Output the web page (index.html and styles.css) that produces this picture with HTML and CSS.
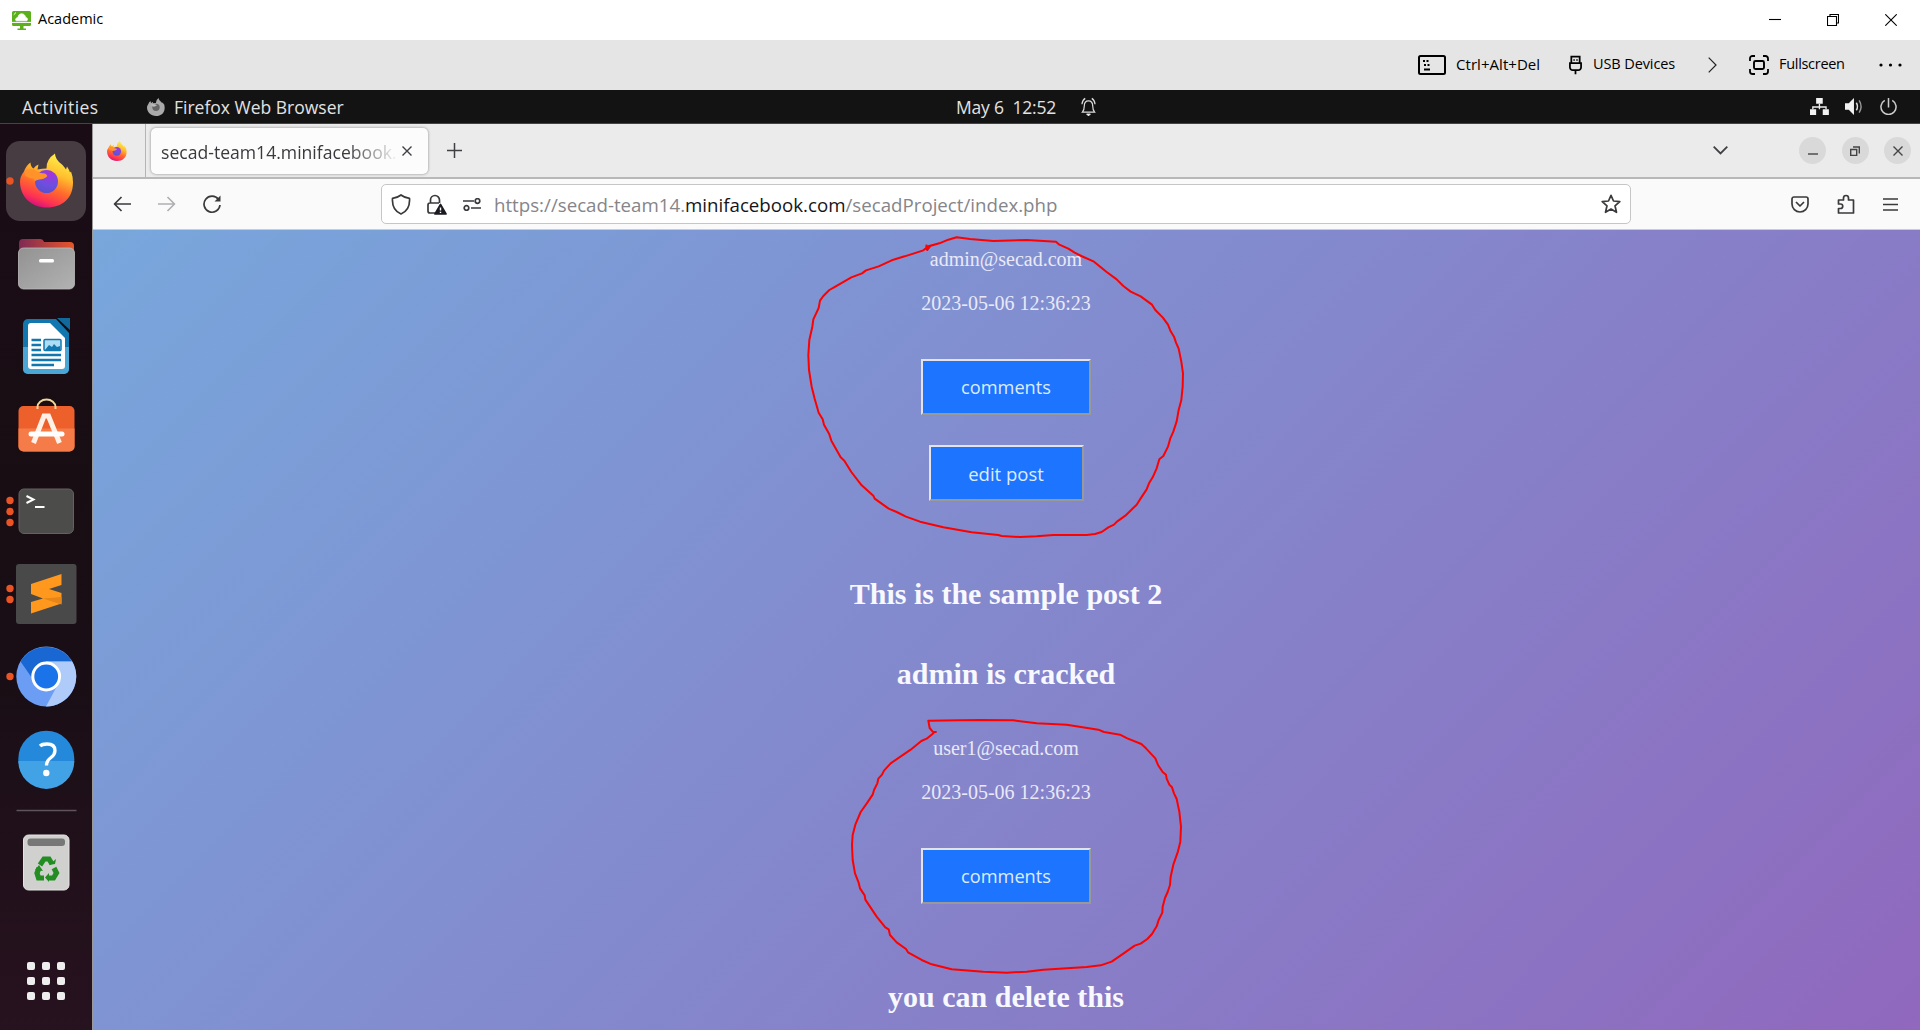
FILE: index.html
```html
<!DOCTYPE html>
<html lang="en">
<head>
<meta charset="utf-8">
<title>Academic</title>
<link rel="stylesheet" href="styles.css">
</head>
<body>
<header class="titlebar">
  <svg class="app-icon" viewBox="0 0 19 19"><path fill="#5cb01c" d="M1.500 0h16a1.500 1.500 0 0 1 1.500 1.500v12a1.500 1.500 0 0 1-1.500 1.500H1.500A1.500 1.500 0 0 1 0 13.500v-12A1.500 1.500 0 0 1 1.500 0Z"/><path d="M4.200 9.800C2.800 8.500 4.200 6.600 6 6.600 6 4 8 2.600 10 2.900c2 0 3.300 1.700 3.400 3.300 2 .5 2.800 2.300 1.400 3.600Z" fill="#fff" stroke="#fff" stroke-width=".8"/><path d="M0 11.400h19" stroke="#fff"/><path d="M1.700 3.800 4 1.500" stroke="#fff"/><path fill="#5cb01c" d="M8 15h3.500v2.500H14V19H5.500v-1.500H8Z"/></svg>
  <span class="app-name">Academic</span>
  <div class="win-controls">
    <svg viewBox="0 0 12 12"><path d="M0 5.500h12"/></svg>
    <svg viewBox="0 0 12 12"><path d="M.5 2.500h9v9h-9zM3 2.500v-2h8.500v8.500H9.500"/></svg>
    <svg viewBox="0 0 12 12"><path d="M.3.300l11.400 11.400M11.700.300.300 11.700"/></svg>
  </div>
</header>
<nav class="vm-toolbar">
  <svg class="kbd" viewBox="0 0 28 20"><rect x="1" y="1" width="26" height="18" rx="1.500" fill="none" stroke="#000" stroke-width="2"/><path d="M5 6h2m1.500 0h2M6 10h2m1.500 0h2M6 14.500h6" stroke="#000" stroke-width="1.800"/></svg>
  <span class="t-cad">Ctrl+Alt+Del</span>
  <svg class="usb" viewBox="0 0 14 20"><path d="M2.500 8V1h9v7M1 8h12v4.500a3 3 0 0 1-3 3H4a3 3 0 0 1-3-3ZM7 15.500V20" fill="none" stroke="#000" stroke-width="1.900"/><path d="M4.700 4.500h1.600m1.500 0h1.600" stroke="#000" stroke-width="1.600"/></svg>
  <span class="t-usb">USB Devices</span>
  <svg class="more" viewBox="0 0 9 16"><path d="M.7.700 8 8 .7 15.300" fill="none" stroke="#222" stroke-width="1.200"/></svg>
  <svg class="full" viewBox="0 0 20 20"><path d="M1 6V3.500A2.500 2.500 0 0 1 3.500 1H6m8 0h2.500A2.500 2.500 0 0 1 19 3.500V6m0 8v2.500a2.500 2.500 0 0 1-2.500 2.500H14m-8 0H3.500A2.500 2.500 0 0 1 1 16.500V14" fill="none" stroke="#000" stroke-width="1.800"/><rect x="5" y="6" width="10" height="8" rx="1.500" fill="none" stroke="#000" stroke-width="1.900"/></svg>
  <span class="t-full">Fullscreen</span>
  <svg class="dots" viewBox="0 0 24 4"><circle cx="2" cy="2" r="1.600"/><circle cx="11.500" cy="2" r="1.600"/><circle cx="21" cy="2" r="1.600"/></svg>
</nav>

<div class="gnome-bar">
  <span class="t-act">Activities</span>
  <svg class="gn-fox" viewBox="0 0 54 54"><use href="#foxshape" fill="#aaa"/><circle cx="27" cy="28" r="11" fill="#666"/><path d="M10 20q10-5 20 2-8 6-14 3Z" fill="#bbb"/></svg>
  <span class="t-ff">Firefox Web Browser</span>
  <span class="t-clock">May 6&nbsp; 12:52</span>
  <svg class="bell" viewBox="0 0 16 20"><path d="M1.500 15.500h13C12.800 13.500 12.500 12 12.500 9c0-3.500-1.500-5.500-4.500-5.500S3.500 5.500 3.500 9c0 3-.3 4.500-2 6.500ZM1 7C1.300 4 2.500 2 4.500.8M15 7C14.700 4 13.500 2 11.500.8" fill="none" stroke="#ddd" stroke-width="1.300"/><path d="M6 17.500h4L8 19.500Z" fill="#eee" stroke="#eee"/></svg>
  <div class="tray">
    <svg viewBox="0 0 20 18"><path fill="#f2f2f2" d="M6.500 0h7v6h-7zM0 12h6.500v6H0zM13.500 12H20v6h-6.500z"/><path d="M10 6v3.500M3 12V9.500h14V12M10 9v3" fill="none" stroke="#eee" stroke-width="1.400"/></svg>
    <svg viewBox="0 0 20 18"><path fill="#f2f2f2" d="M0 5.500h4L9.500 0v18L4 12.500H0z"/><path d="M12 5q2.500 4 0 8" fill="none" stroke="#ddd" stroke-width="1.600"/><path d="M15 2.500q4 6.500 0 13" fill="none" stroke="#999" stroke-width="1.500"/></svg>
    <svg viewBox="0 0 18 18"><path d="M5 2.500a8 8 0 1 0 8 0M9 0v10" fill="none" stroke="#ccc" stroke-width="1.600"/></svg>
  </div>
</div>

<div class="desktop">
  <aside class="dock">
    <svg viewBox="0 0 92 907">
      <defs>
        <linearGradient id="fox" x1=".75" y1="0" x2=".35" y2="1"><stop offset="0" stop-color="#fff44f"/><stop offset=".35" stop-color="#ffc02e"/><stop offset=".62" stop-color="#ff6b2c"/><stop offset=".85" stop-color="#ff3352"/><stop offset="1" stop-color="#d6107e"/></linearGradient>
        <radialGradient id="globe" cx=".65" cy=".15" r=".9"><stop offset="0" stop-color="#a832d8"/><stop offset=".6" stop-color="#6c4fe0"/><stop offset="1" stop-color="#5a50c8"/></radialGradient>
        <linearGradient id="fold" x2="1"><stop offset="0" stop-color="#7d2a55"/><stop offset="1" stop-color="#e8562a"/></linearGradient>
        <linearGradient id="grey" x2="1" y2="1"><stop offset="0" stop-color="#929292"/><stop offset="1" stop-color="#b2b2b2"/></linearGradient>
        <path id="foxshape" d="M4 18Q6 12 10.500 9q0 4 3 6 2-3 5-4l-1 5q5-1 9-1Q26 6 35 0q0 6 7 11 2 2 4 5l1-3q2 3 3 6l1-1q2 5 2 11C53 45 42 54 27 54S0 44 0 28q0-5 4-10Z"/>
        <g id="firefox"><use href="#foxshape" fill="url(#fox)"/><circle cx="26.500" cy="28" r="11.500" fill="url(#globe)"/><path d="M5 18q4-3 9-2 5 4 11 4 3 2 2 3-3 3-8 3-4 1-4 2-1-3-2-3-4 0-8-3Z" fill="#ff932a"/></g>
      </defs>
      <rect x="6" y="18" width="80" height="80" rx="14" fill="#463c42"/>
      <g fill="#ea5324"><circle cx="10" cy="58" r="3.700"/><circle cx="10" cy="377.500" r="3.700"/><circle cx="10" cy="388.500" r="3.700"/><circle cx="10" cy="399.500" r="3.700"/><circle cx="10" cy="465.500" r="3.700"/><circle cx="10" cy="476.500" r="3.700"/><circle cx="10" cy="553.500" r="3.700"/></g>
      <use href="#firefox" transform="translate(20 30.500)"/>
      <g transform="translate(0 -3)">
        <path d="M19 123a4 4 0 0 1 4-4h17q3 0 4 3h26a4 4 0 0 1 4 4v24H19Z" fill="url(#fold)"/><rect x="18.500" y="128" width="56" height="41" rx="5" fill="url(#grey)" stroke="#bbb" stroke-width=".8"/><rect x="39" y="139" width="15" height="3.600" rx="1.500" fill="#fff"/>
      </g>
      <g transform="translate(0 -3)">
        <path d="M28 199h28l13 14v36a5 5 0 0 1-5 5H28a5 5 0 0 1-5-5V204a5 5 0 0 1 5-5Z" fill="#1277ae"/><path d="M23 227h46v22a5 5 0 0 1-5 5H28a5 5 0 0 1-5-5Z" fill="#4aa7d5"/><path d="M28 206q0-3 3-3h19l15 15v28q0 3-3 3H31q-3 0-3-3Z" fill="#fff"/><path d="M57 198h13v12Z" fill="#126a9c"/><path d="M31.500 220H41m-9.500 5H41m-9.500 5H41m-9.500 5H61m-29.500 5H61m-29.500 5H54" stroke="#1277ae" stroke-width="2.300"/><rect x="44" y="219.500" width="17" height="11" rx="1" fill="#aedcf4" stroke="#1277ae" stroke-width="1.500"/><path d="m45 230 4-5 3 2 2-3 3 3 3-1v4Z" fill="#1277ae"/>
      </g>
      <g>
        <rect x="18.500" y="283" width="56" height="45.500" rx="5" fill="#ee602b"/><path d="M18.500 305.500h56v18a5 5 0 0 1-5 5h-46a5 5 0 0 1-5-5Z" fill="#f57c49"/><path d="M37.500 286v-2a9 7.500 0 0 1 18 0v2" fill="none" stroke="#efd69b" stroke-width="2"/><path d="m33.500 320 10.500-27h4.500L59.500 320" fill="none" stroke="#fff1e8" stroke-width="5"/><path d="M31 311h31" stroke="#fff" stroke-width="5" stroke-linecap="round"/>
      </g>
      <rect x="19" y="366" width="54.500" height="44.500" rx="5" fill="#4c4c4b" stroke="#626262"/><path d="m26.500 373 7 3.500-7 3.500M35 384h9.500" fill="none" stroke="#fff" stroke-width="2"/>
      <rect x="16" y="441" width="60.500" height="60" rx="3" fill="#494949"/><path d="m31 461 30.500-10v11L49 466l12.500 4v10.500L31 490.500V479l12-3.500-12-4.500Z" fill="#ff981d"/><path d="m43 475.500 18.500 6V474Z" fill="#e78518"/>
      <circle cx="46.300" cy="553.500" r="30" fill="#6c9df5"/><path d="M20.500 538.500A30 30 0 0 1 72 538.500H46.300v15H31Z" fill="#1967d2"/><path d="M72.200 538.500A30 30 0 0 1 46 583.500l15-28-15-17Z" fill="#afcbfa"/><circle cx="46.200" cy="553.500" r="13.400" fill="#1a73e8" stroke="#fff" stroke-width="3"/>
      <circle cx="46.300" cy="635.700" r="28" fill="#2489da"/><path d="M18.300 638h56a28 28 0 0 1-56 0Z" fill="#42a2e6"/><path d="M40 623q2-2 7-2 8 0 8 6.500 0 4-4 7-4.500 3-4.500 8" fill="none" stroke="#fff" stroke-width="3.300"/><circle cx="46.300" cy="650" r="3.200" fill="#fff"/>
      <path d="M16.500 687.500h60" stroke="#5e5459" stroke-width="1.300"/>
      <rect x="23.500" y="712" width="45.500" height="55" rx="5" fill="#d0d1cf" stroke="#e3e3e3"/><rect x="27.500" y="715.500" width="37.500" height="7.500" rx="3" fill="#777"/>
      <g fill="none" stroke="#238c22" stroke-width="5.200"><path d="m40 742 4-6h5l3 5M54 745l2.500 5-3 5H48M44 755h-5.500l-1.500-5 2-5"/></g><path d="m49 742 6-1 1-5ZM49 750v9l-4-4.500ZM35 747l4-5 4 6Z" fill="#238c22"/>
      <g fill="#eee"><rect x="27" y="839" width="8" height="8" rx="2"/><rect x="42" y="839" width="8" height="8" rx="2"/><rect x="57" y="839" width="8" height="8" rx="2"/><rect x="27" y="854" width="8" height="8" rx="2"/><rect x="42" y="854" width="8" height="8" rx="2"/><rect x="57" y="854" width="8" height="8" rx="2"/><rect x="27" y="869" width="8" height="8" rx="2"/><rect x="42" y="869" width="8" height="8" rx="2"/><rect x="57" y="869" width="8" height="8" rx="2"/></g>
    </svg>
  </aside>

  <section class="browser">
    <div class="tabstrip">
      <div class="pinned"><svg viewBox="0 0 54 54"><use href="#firefox"/></svg></div>
      <div class="tab"><span class="tab-title">secad-team14.minifacebook.</span><svg class="tab-x" viewBox="0 0 10 10"><path d="m.5.500 9 9m0-9-9 9"/></svg></div>
      <svg class="newtab" viewBox="0 0 14 14"><path d="M7 0v14M0 7h14"/></svg>
      <svg class="alltabs" viewBox="0 0 15 9"><path d="m.7.700 6.800 6.800L14.300.700"/></svg>
      <div class="ctl"><svg viewBox="0 0 10 10"><path d="M0 8h10"/></svg></div>
      <div class="ctl"><svg viewBox="0 0 10 10"><path d="M.7 3.500h6v6h-6zM3 1h6.300v6.500" /></svg></div>
      <div class="ctl"><svg viewBox="0 0 10 10"><path d="m.5.500 9 9m0-9-9 9"/></svg></div>
    </div>
    <div class="navbar">
      <svg class="back" viewBox="0 0 18 16"><path d="M18 8H1.500M8.500 1l-7 7 7 7"/></svg>
      <svg class="fwd" viewBox="0 0 18 16"><path d="M0 8h16.500M9.500 1l7 7-7 7"/></svg>
      <svg class="reload" viewBox="0 0 20 20"><path d="M16.500 5.500A8 8 0 1 0 18 11"/><path d="M18.500 1.500v6h-6Z" fill="#3a3a3d" stroke="none"/></svg>
      <div class="urlbar">
        <svg class="shield" viewBox="0 0 20 21"><path d="M10 1C7.500 3 4.500 4 1.500 4.300 1 11 3 17 10 20c7-3 9-9 8.500-15.700C15.500 4 12.500 3 10 1Z"/></svg>
        <svg class="lock" viewBox="0 0 20 21"><path d="M3.500 9V6a4.500 4.500 0 0 1 9 0v3M9 19H3a2 2 0 0 1-2-2v-6a2 2 0 0 1 2-2h9"/><path d="m13.500 10.500 5.500 9.500H8Z" fill="#1c1b22" stroke="#1c1b22"/><path d="M13.500 13.500v3m0 1.200v1.300" stroke="#fff" stroke-width="1.400"/></svg>
        <svg class="perm" viewBox="0 0 18 13"><path d="M0 3h11M8 10h10"/><circle cx="14.500" cy="3" r="2.300"/><circle cx="3.500" cy="10" r="2.300"/></svg>
        <span class="url"><span class="u1">https://secad-team14.</span><b>minifacebook.com</b><span class="u3">/secadProject/index.php</span></span>
        <svg class="star" viewBox="0 0 20 20"><path d="m10 1.300 2.500 5.700 6.300.6-4.800 4.200 1.500 6.500L10 15l-5.500 3.300L6 11.800 1.200 7.600l6.300-.6Z"/></svg>
      </div>
      <svg class="pocket" viewBox="0 0 18 17"><path d="M3 1h12a2 2 0 0 1 2 2v5a8 8 0 0 1-16 0V3a2 2 0 0 1 2-2ZM5 6l4 4 4-4"/></svg>
      <svg class="ext" viewBox="0 0 18 20"><path d="M1.500 6h5V4a2.500 2.500 0 0 1 5 0v2h5v13h-15v-4.500h2a2.200 2.200 0 0 0 0-4.500h-2Z"/></svg>
      <svg class="menu" viewBox="0 0 15 13"><path d="M0 1h15M0 6.500h15M0 12h15"/></svg>
    </div>
    <main class="page">
      <p>admin@secad.com</p>
      <p>2023-05-06 12:36:23</p>
      <button class="btn btn-comments">comments</button>
      <button class="btn btn-edit">edit post</button>
      <h2 class="post-title">This is the sample post 2</h2>
      <h2 class="post-body">admin is cracked</h2>
      <p>user1@secad.com</p>
      <p>2023-05-06 12:36:23</p>
      <button class="btn btn-comments">comments</button>
      <h2 class="post-title">you can delete this</h2>
    </main>
  </section>
</div>

<svg class="ink" viewBox="0 0 1920 1030">
  <path transform="translate(780 220) scale(.33333)" d="M440 74L438 86L442 90L452 77L478 70L505 59L530 52L570 57L640 63L740 60L828 65L838 74L865 86L884 98L904 108L942 125L980 156L1010 178L1030 198L1052 215L1082 229L1116 254L1126 270L1148 292L1164 314L1172 334L1182 350L1188 368L1196 386L1204 425L1209 460L1208 500L1204 540L1196 570L1190 604L1180 635L1171 655L1164 680L1150 708L1138 718L1130 745L1118 772L1107 790L1100 808L1084 832L1070 854L1036 887L1012 904L1002 914L985 922L965 936L945 942L920 945L820 945L770 949L720 951L665 948L655 945L575 937L490 922L420 905L378 890L350 876L326 866L284 836L280 827L245 796L214 756L193 722L182 712L154 662L148 643L132 614L128 598L116 578L104 536L95 500L87 450L85 405L88 360L97 320L100 298L116 264L120 242L130 228L148 210L162 202L214 172L246 160L258 151L296 139L340 119L374 109L430 91L445 79L478 70"/>
  <path transform="translate(780 560) scale(.33333)" d="M470 516L458 515L449 504L445 482L540 481L600 480L700 481L770 490L860 494L955 509L972 516L1020 524L1042 535L1084 552L1098 565L1126 595L1134 615L1148 636L1158 644L1160 656L1168 674L1176 682L1182 700L1190 717L1198 755L1203 800L1201 845L1194 874L1180 914L1172 950L1170 975L1163 996L1155 1014L1148 1040L1147 1058L1136 1080L1130 1099L1116 1122L1102 1137L1082 1151L1064 1157L1030 1181L995 1205L962 1216L920 1221L790 1229L740 1235L680 1238L610 1235L515 1228L455 1213L425 1200L384 1177L378 1167L350 1147L330 1125L326 1108L316 1102L290 1070L266 1034L256 1019L254 1006L240 985L236 968L225 940L218 900L216 855L218 825L226 794L242 756L262 728L278 704L282 690L292 670L295 656L306 644L312 632L332 610L392 569L424 543L440 536L462 518"/>
</svg>
</body>
</html>
```
FILE: styles.css
```css
* { box-sizing: border-box; }
body { margin: 0; width: 1920px; height: 1030px; overflow: hidden; position: relative; font-family: "Open Sans", "Noto Sans", sans-serif; background: #fff; }
svg { display: block; flex: none; }
span { white-space: nowrap; flex: none; }

.titlebar { height: 40px; display: flex; align-items: center; padding-left: 12px; background: #fff; color: #000; }
.app-icon { width: 19px; height: 19px; margin-right: 7px; }
.app-name { font-size: 14.5px; line-height: 20px; margin-top: -2px; }
.win-controls { margin-left: auto; display: flex; gap: 46px; padding-right: 23px; }
.win-controls svg { width: 12px; height: 12px; fill: none; stroke: #000; stroke-width: 1.1; }

.vm-toolbar { height: 50px; background: #e5e5e5; display: flex; align-items: center; padding-left: 1418px; font-size: 14.5px; color: #000; }
.vm-toolbar span { line-height: 20px; margin-top: -2px; }
.kbd { width: 28px; height: 20px; margin-right: 10px; }
.t-cad { width: 113px; font-size: 15px; letter-spacing: .05px; }
.usb { width: 13px; height: 20px; margin-right: 11px; }
.t-usb { width: 115px; letter-spacing: -.1px; }
.more { width: 9px; height: 16px; margin-right: 32px; }
.full { width: 20px; height: 20px; margin-right: 10px; }
.t-full { width: 100px; letter-spacing: -.3px; }
.dots { width: 24px; height: 4px; }

.gnome-bar { height: 34px; background: #131313; border-bottom: 1px solid #444; color: #e2e2e2; display: flex; align-items: center; padding-left: 22px; font-size: 17.5px; font-weight: 500; }
.t-act { width: 125px; letter-spacing: .45px; }
.gn-fox { width: 18px; height: 18px; margin-right: 9px; }
.t-ff { width: 782px; }
.t-clock { width: 125px; letter-spacing: -.2px; }
.bell { width: 15px; height: 20px; }
.tray { margin-left: auto; display: flex; gap: 16px; padding-right: 23px; }
.tray svg { height: 17px; }

.desktop { display: flex; height: 906px; }
.dock { width: 92px; background: linear-gradient(#1a0c14, #190e15 60%, #27121f); flex: none; }
.dock svg { width: 92px; height: 907px; margin-top: -1px; }
.browser { flex: 1; display: flex; flex-direction: column; min-width: 0; border-left: 1px solid #999; }

.tabstrip { height: 55px; background: #ebebeb; border-bottom: 2px solid #b8b8b8; display: flex; align-items: center; flex: none; }
.pinned { width: 53px; height: 53px; border-right: 1px solid #b4b4b4; display: grid; place-items: center; padding-right: 4px; }
.pinned svg { width: 20px; height: 20px; }
.tab { margin-left: 5px; width: 277px; height: 46px; border-radius: 5px; background: #fcfcfc; box-shadow: 0 0 3px #888; display: flex; align-items: center; padding-left: 10px; }
.tab-title { width: 238px; overflow: hidden; font-size: 17.6px; font-weight: 500; color: #3a3a3e; padding-top: 2px; -webkit-mask-image: linear-gradient(90deg, #000 78%, transparent); mask-image: linear-gradient(90deg, #000 78%, transparent); }
.tab-x { width: 10px; height: 10px; margin-left: 3px; }
.newtab { width: 15px; height: 15px; margin-left: 19px; }
.alltabs { width: 15px; height: 9px; margin-left: auto; margin-right: 71px; }
.tab-x, .newtab, .alltabs { fill: none; stroke: #404044; stroke-width: 1.4; }
.alltabs { stroke-width: 1.8; }
.ctl { width: 27px; height: 27px; border-radius: 50%; background: #d9d9d9; display: grid; place-items: center; margin-right: 15.500px; flex: none; }
.ctl:last-child { margin-right: 9px; }
.ctl svg { width: 10px; height: 10px; fill: none; stroke: #444; stroke-width: 1.4; }

.navbar { height: 51px; background: #fafafa; border-bottom: 1px solid #ccc; display: flex; align-items: center; padding-left: 20px; flex: none; }
.navbar svg { fill: none; stroke: #3a3a3d; stroke-width: 1.7; stroke-linejoin: round; }
.back { width: 18px; height: 16px; margin-right: 27px; }
.navbar .fwd { width: 18px; height: 16px; margin-right: 26px; stroke: #b0b0b2; }
.reload { width: 20px; height: 20px; }
.urlbar { margin-left: 159px; width: 1250px; height: 40px; border: 1px solid #c6c6c6; border-radius: 5px; background: #fff; display: flex; align-items: center; padding-left: 9px; flex: none; }
.shield { width: 20px; height: 21px; margin-right: 16px; }
.lock { width: 20px; height: 21px; margin-right: 16px; }
.perm { width: 18px; height: 13px; margin-right: 13px; }
.url { font-size: 18.7px; color: #85858a; }
.url b { font-weight: 500; color: #151519; }
.star { width: 20px; height: 20px; margin-left: auto; margin-right: 9px; }
.pocket { width: 18px; height: 17px; margin-left: 160px; }
.ext { width: 18px; height: 20px; margin-left: 28px; }
.menu { width: 15px; height: 13px; margin-left: 28px; }

.page { flex: 1; background: linear-gradient(135deg, #78a7dc, #9068bd); padding: 18px 1px 0 0; display: flex; flex-direction: column; align-items: center; font-family: "Liberation Serif", serif; min-height: 0; }
.page p { margin: 0 0 21px; font-size: 20px; line-height: 23px; color: #e9e9f8; }
.page h2 { margin: 0; font-size: 30px; line-height: 34px; font-weight: bold; color: #f8f8ff; }
.btn { font-family: "Open Sans", "Noto Sans", sans-serif; font-size: 18.2px; color: #dcecff; background: #1d74ff; border: 2px solid; border-color: #e3e3e8 #999 #999 #e3e3e8; height: 56px; padding: 0; flex: none; }
.btn-comments { width: 170px; margin-top: 23px; }
.btn-edit { width: 155px; margin-top: 30px; font-size: 18.5px; }
.page .post-title { margin-top: 76px; }
.page .post-body { margin: 46px 0; }

.ink { position: absolute; left: 0; top: 0; width: 1920px; height: 1030px; fill: none; stroke: #fe0000; stroke-width: 6; stroke-linejoin: round; pointer-events: none; }
```
